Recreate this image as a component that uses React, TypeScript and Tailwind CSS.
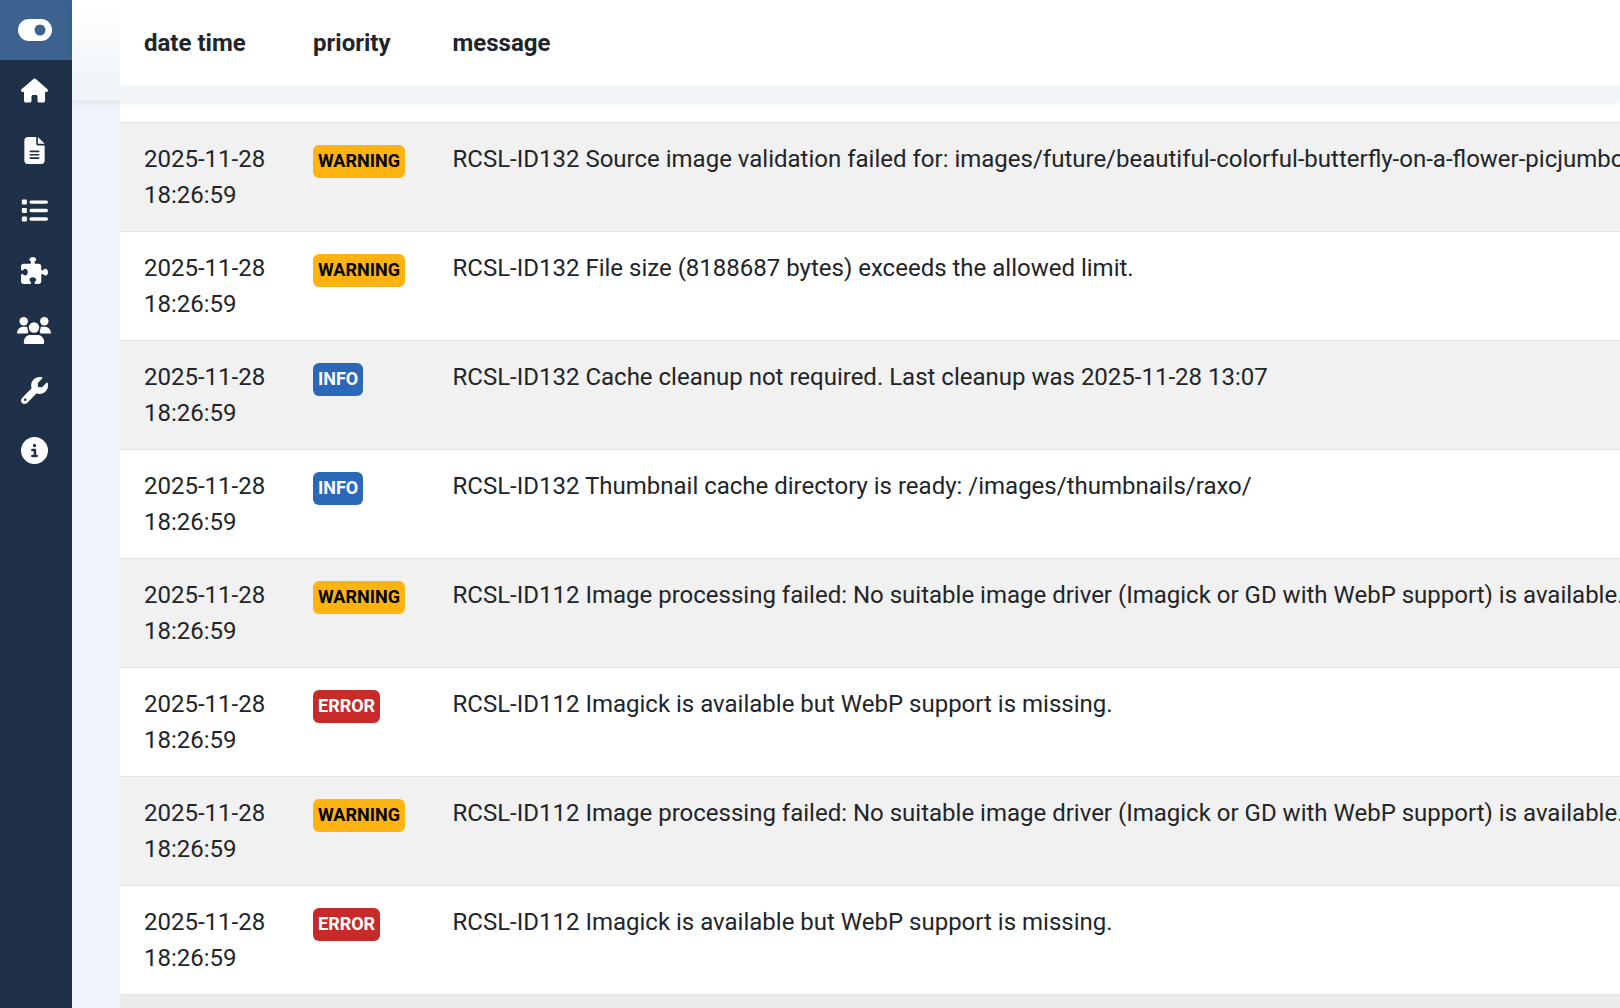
import React from "react";
import { FaHouse, FaFileLines, FaList, FaPuzzlePiece, FaWrench, FaCircleInfo } from "react-icons/fa6";

function UsersIcon({ className }: { className?: string }) {
  return (
    <svg viewBox="0 0 34 27" className={className} fill="#ffffff" aria-hidden="true">
      <circle cx="6.7" cy="4.2" r="4.2" />
      <circle cx="27.3" cy="4.2" r="4.2" />
      <path d="M0 16.5C0 12.5 3 9.8 6.5 9.8H10C11.5 9.8 12 16.5 10 16.5Z" />
      <path d="M34 16.5C34 12.5 31 9.8 27.5 9.8H24C22.5 9.8 22 16.5 24 16.5Z" />
      <circle cx="17" cy="10.5" r="6.7" fill="#1f3148" />
      <circle cx="17" cy="10.5" r="5.2" />
      <path d="M5 27V24C5 19 9 16.5 13 16.5H21C25 16.5 29 19 29 24V27Z" fill="#1f3148" />
      <path d="M6.8 25.4C6.8 20.6 10 18 13.2 18H20.8C24 18 27.2 20.6 27.2 25.4Q27.2 27 25.6 27H8.4Q6.8 27 6.8 25.4Z" />
    </svg>
  );
}

const icons = [FaHouse, FaFileLines, FaList, FaPuzzlePiece, UsersIcon, FaWrench, FaCircleInfo];

type P = "WARNING" | "INFO" | "ERROR";
const rows: { p: P; m: string }[] = [
  { p: "WARNING", m: "RCSL-ID132 Source image validation failed for: images/future/beautiful-colorful-butterfly-on-a-flower-picjumbo-com.jpg" },
  { p: "WARNING", m: "RCSL-ID132 File size (8188687 bytes) exceeds the allowed limit." },
  { p: "INFO", m: "RCSL-ID132 Cache cleanup not required. Last cleanup was 2025-11-28 13:07" },
  { p: "INFO", m: "RCSL-ID132 Thumbnail cache directory is ready: /images/thumbnails/raxo/" },
  { p: "WARNING", m: "RCSL-ID112 Image processing failed: No suitable image driver (Imagick or GD with WebP support) is available." },
  { p: "ERROR", m: "RCSL-ID112 Imagick is available but WebP support is missing." },
  { p: "WARNING", m: "RCSL-ID112 Image processing failed: No suitable image driver (Imagick or GD with WebP support) is available." },
  { p: "ERROR", m: "RCSL-ID112 Imagick is available but WebP support is missing." },
];

function Badge({ p }: { p: P }) {
  const cls =
    p === "WARNING"
      ? "bg-[#ffb310] text-black"
      : p === "INFO"
        ? "bg-[#2b69b8] text-white"
        : "bg-[#c72a28] text-white";
  return (
    <span className={`inline-block h-[33px] rounded-[6px] px-[5px] text-[18px] font-bold leading-[31px] ${cls}`}>{p}</span>
  );
}

export default function App() {
  return (
    <div className="flex h-[1008px] w-[1620px] overflow-hidden bg-[#eef3fc] font-['Roboto',sans-serif] text-[24px] leading-[36px] text-[#212529]">
      <aside className="flex w-[72px] shrink-0 flex-col bg-[#1f3148] text-white">
        <div className="flex h-[60px] items-center justify-center bg-[#3c6290] pr-[2px]">
          <svg viewBox="0 0 34 22" className="h-[22px] w-[34px]" aria-hidden="true">
            <rect x="0" y="0" width="34" height="22" rx="11" fill="#ffffff" />
            <circle cx="22" cy="11" r="5.5" fill="#3c6290" />
          </svg>
        </div>
        {icons.map((I, i) => (
          <div key={i} className="flex h-[60px] items-center justify-center pr-[4px] pt-[1px]">
            <I className="h-[27px] w-auto" />
          </div>
        ))}
      </aside>
      <main className="flex min-w-0 flex-1 flex-col">
        <header className="relative z-10 h-[100px] shrink-0 bg-[linear-gradient(to_bottom,#ffffff,#eef3f8)] pl-[48px] shadow-[0_2px_8px_rgba(0,0,0,0.08)]">
          <div className="flex h-[85px] items-center bg-white font-bold">
            <div className="w-[193px] pl-[24px]">date time</div>
            <div className="w-[139.5px]">priority</div>
            <div>message</div>
          </div>
          <div className="h-[15px] -ml-[48px] bg-[#f3f6f9]" />
        </header>
        <section className="ml-[48px] flex-1 overflow-hidden bg-white">
          <div className="h-[22px]" />
          {rows.map((r, i) => (
            <div key={i} className={`flex h-[109px] border-t border-[#e2e3e5] py-[18px] ${i % 2 === 0 ? "bg-[#f1f1f1]" : "bg-white"}`}>
              <div className="w-[193px] shrink-0 pl-[24px]">
                2025-11-28
                <br />
                18:26:59
              </div>
              <div className="w-[139.5px] shrink-0 pt-[4px]">
                <div className="flex"><Badge p={r.p} /></div>
              </div>
              <div className="whitespace-nowrap">{r.m}</div>
            </div>
          ))}
          <div className="h-[14px] border-t border-[#e2e3e5] bg-[#ebebeb]" />
        </section>
      </main>
    </div>
  );
}
